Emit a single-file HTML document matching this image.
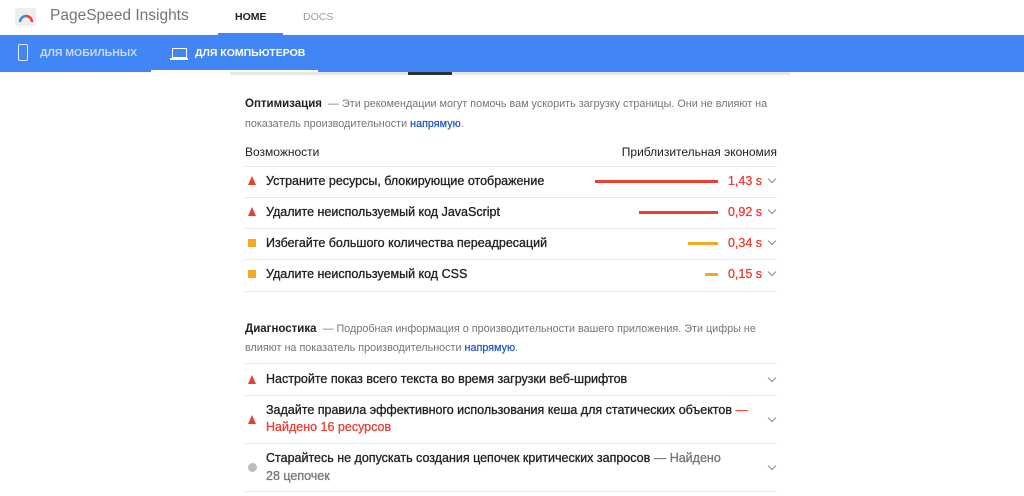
<!DOCTYPE html>
<html><head><meta charset="utf-8"><style>
body{margin:0;width:1024px;height:496px;overflow:hidden;background:#fff;font-family:"Liberation Sans",Arial,sans-serif;position:relative}
.a{position:absolute;white-space:nowrap}
.hr{position:absolute;left:245px;width:532px;height:1px;background:#e6e6e6}
.t{font-size:12.5px;color:#212121;left:266px;-webkit-text-stroke:0.3px currentColor}
.d{font-size:10.8px;color:#757575}
.bar{position:absolute;height:3px}
.v{font-size:12.5px;color:#eb3f33;right:262px;text-align:right;-webkit-text-stroke:0.3px currentColor}
.ch{position:absolute;left:769px;width:5px;height:5px;border-right:1px solid #888;border-bottom:1px solid #888;transform:rotate(45deg)}
.tri{position:absolute;left:248px;width:0;height:0;border-left:4.5px solid transparent;border-right:4.5px solid transparent;border-bottom:9px solid #eb3f33}
.sq{position:absolute;left:248px;width:8px;height:8px;background:#f5a623}
</style></head><body>
<div class="a" style="left:0;top:0;width:1024px;height:35px;background:#fff"></div>
<div class="a" style="left:15px;top:8px;width:21px;height:18px;background:#eee;border-radius:2px"></div>
<svg class="a" style="left:17px;top:13px" width="18" height="10" viewBox="0 0 18 10"><path d="M3 9 A6 6 0 0 1 9 3" stroke="#4285f4" stroke-width="2.5" fill="none"/><path d="M9 3 A6 6 0 0 1 15 9" stroke="#ea4335" stroke-width="2.5" fill="none"/></svg>
<div class="a" style="left:50px;top:7px;font-size:15.5px;color:#757575">PageSpeed Insights</div>
<div class="a" style="left:235px;top:11px;font-size:10.5px;font-weight:bold;color:#212121">HOME</div>
<div class="a" style="left:303px;top:11px;font-size:10.5px;color:#9e9e9e">DOCS</div>
<div class="a" style="left:218px;top:33px;width:65px;height:2px;background:#4285f4"></div>
<div class="a" style="left:0;top:35px;width:1024px;height:37px;background:#4285f4"></div>
<div class="a" style="left:18px;top:44px;width:8px;height:15px;border:1.5px solid #e3ecfd;border-radius:2px"></div>
<div class="a" style="left:40px;top:47px;font-size:10.5px;font-weight:bold;color:#c7d9fb">ДЛЯ МОБИЛЬНЫХ</div>
<div class="a" style="left:172px;top:48px;width:13px;height:8px;border:1.5px solid #fff"></div>
<div class="a" style="left:170px;top:58px;width:18px;height:1.5px;background:#fff"></div>
<div class="a" style="left:195px;top:47px;font-size:10.5px;font-weight:bold;color:#fff">ДЛЯ КОМПЬЮТЕРОВ</div>
<div class="a" style="left:151px;top:70px;width:167px;height:2px;background:#fff"></div>
<div class="a" style="left:230px;top:72px;width:560px;height:3px;background:#e6e6e6"></div>
<div class="a" style="left:408px;top:72px;width:44px;height:3px;background:#263238"></div>

<div class="a" style="left:245px;top:98px;font-size:11.5px;font-weight:bold;color:#212121">Оптимизация <span class="d" style="font-weight:normal">&nbsp;— Эти рекомендации могут помочь вам ускорить загрузку страницы. Они не влияют на</span></div>
<div class="a d" style="left:245px;top:118px">показатель производительности <span style="color:#1a55c4;-webkit-text-stroke:0.2px currentColor">напрямую</span>.</div>
<div class="a" style="left:245px;top:145px;font-size:12px;color:#212121">Возможности</div>
<div class="a" style="right:247px;top:145px;font-size:12px;color:#212121">Приблизительная экономия</div>
<div class="hr" style="top:166px"></div>
<div class="tri" style="top:176px"></div><div class="a t" style="top:174px">Устраните ресурсы, блокирующие отображение</div><div class="bar" style="left:595px;width:123px;top:180px;background:#eb3f33"></div><div class="a v" style="top:174px">1,43 s</div><div class="ch" style="top:176px"></div>
<div class="hr" style="top:197px"></div>
<div class="tri" style="top:207px"></div><div class="a t" style="top:205px">Удалите неиспользуемый код JavaScript</div><div class="bar" style="left:639px;width:79px;top:211px;background:#eb3f33"></div><div class="a v" style="top:205px">0,92 s</div><div class="ch" style="top:207px"></div>
<div class="hr" style="top:228px"></div>
<div class="sq" style="top:239px"></div><div class="a t" style="top:236px">Избегайте большого количества переадресаций</div><div class="bar" style="left:688px;width:30px;top:242px;background:#f5a623"></div><div class="a v" style="top:236px">0,34 s</div><div class="ch" style="top:238px"></div>
<div class="hr" style="top:259px"></div>
<div class="sq" style="top:270px"></div><div class="a t" style="top:267px">Удалите неиспользуемый код CSS</div><div class="bar" style="left:705px;width:13px;top:273px;background:#f5a623"></div><div class="a v" style="top:267px">0,15 s</div><div class="ch" style="top:269px"></div>
<div class="hr" style="top:291px"></div>

<div class="a" style="left:245px;top:323px;font-size:11.5px;font-weight:bold;color:#212121">Диагностика <span class="d" style="font-weight:normal">&nbsp;— Подробная информация о производительности вашего приложения. Эти цифры не</span></div>
<div class="a d" style="left:245px;top:342px">влияют на показатель производительности <span style="color:#1a55c4;-webkit-text-stroke:0.2px currentColor">напрямую</span>.</div>
<div class="hr" style="top:363px"></div>
<div class="tri" style="top:375px"></div><div class="a t" style="top:372px">Настройте показ всего текста во время загрузки веб-шрифтов</div><div class="ch" style="top:375px"></div>
<div class="hr" style="top:395px"></div>
<div class="tri" style="top:415px"></div><div class="a t" style="top:403px">Задайте правила эффективного использования кеша для статических объектов <span style="color:#eb3f33">—</span></div><div class="a t" style="top:420px;color:#eb3f33">Найдено 16 ресурсов</div><div class="ch" style="top:415px"></div>
<div class="hr" style="top:443px"></div>
<div class="a" style="left:248px;top:463px;width:9px;height:9px;border-radius:50%;background:#bdbdbd"></div><div class="a t" style="top:451px">Старайтесь не допускать создания цепочек критических запросов <span style="color:#757575">— Найдено</span></div><div class="a t" style="top:469px;color:#757575">28 цепочек</div><div class="ch" style="top:463px"></div>
<div class="hr" style="top:491px"></div>
</body></html>
